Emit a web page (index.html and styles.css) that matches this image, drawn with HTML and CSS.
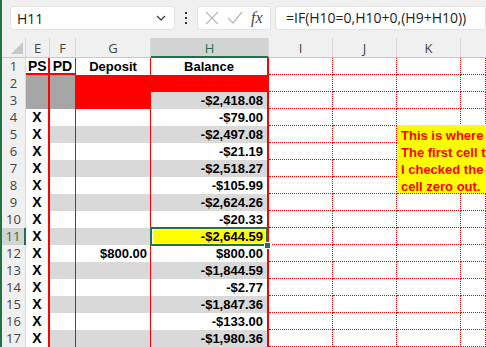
FILE: index.html
```html
<!DOCTYPE html>
<html>
    <head>
        <meta charset="UTF-8">
        <title>Balance sheet</title>
        <link rel="stylesheet" href="styles.css">
    </head>
    <body>
        <div id="app">
            <div class="toolbar">
                <div class="namebox">
                    <span>H11</span>
                    <svg class="chev" width="10" height="6" viewBox="0 0 10 6"><path d="M1 1 L5 5 L9 1" fill="none" stroke="#333" stroke-width="1.2"/></svg>
                </div>
                <svg class="dots" width="4" height="12" viewBox="0 0 4 12"><rect x="1" y="0" width="2" height="2" fill="#333"/><rect x="1" y="5" width="2" height="2" fill="#333"/><rect x="1" y="10" width="2" height="2" fill="#333"/></svg>
                <div class="fxbox">
                    <svg width="14" height="14" viewBox="0 0 14 14"><path d="M1 1 L13 13 M13 1 L1 13" stroke="#b9b9b9" stroke-width="1.2"/></svg>
                    <svg width="16" height="14" viewBox="0 0 16 14"><path d="M1 7 L6 12 L15 1" fill="none" stroke="#b9b9b9" stroke-width="1.2"/></svg>
                    <span class="fx">fx</span>
                </div>
                <div class="formula">=IF(H10=0,H10+0,(H9+H10))</div>
            </div>

            <div class="sheet">
                <div class="corner"><svg width="12" height="12" viewBox="0 0 12 12"><path d="M12 0 L12 12 L0 12 Z" fill="#c8c8c8"/></svg></div>
                <div class="ch">E</div><div class="ch">F</div><div class="ch">G</div><div class="ch active">H</div><div class="ch">I</div><div class="ch">J</div><div class="ch">K</div><div class="ch last"></div>

                <div class="rh">1</div><div class="e top">PS</div><div class="f top">PD</div><div class="g c">Deposit</div><div class="h c">Balance</div><div class="d"></div><div class="d"></div><div class="d"></div><div class="d"></div>
                <div class="rh">2</div><div class="e dk"></div><div class="f dk"></div><div class="g red"></div><div class="h red"></div><div class="d"></div><div class="d"></div><div class="d"></div><div class="d"></div>
                <div class="rh">3</div><div class="e dk"></div><div class="f dk"></div><div class="g red"></div><div class="h alt">-$2,418.08</div><div class="d"></div><div class="d"></div><div class="d"></div><div class="d"></div>
                <div class="rh">4</div><div class="e">X</div><div class="f"></div><div class="g"></div><div class="h">-$79.00</div><div class="d"></div><div class="d"></div><div class="d"></div><div class="d"></div>
                <div class="rh">5</div><div class="e">X</div><div class="f alt"></div><div class="g alt"></div><div class="h alt">-$2,497.08</div><div class="d"></div><div class="d"></div><div class="d"></div><div class="d"></div>
                <div class="rh">6</div><div class="e">X</div><div class="f"></div><div class="g"></div><div class="h">-$21.19</div><div class="d"></div><div class="d"></div><div class="d"></div><div class="d"></div>
                <div class="rh">7</div><div class="e">X</div><div class="f alt"></div><div class="g alt"></div><div class="h alt">-$2,518.27</div><div class="d"></div><div class="d"></div><div class="d"></div><div class="d"></div>
                <div class="rh">8</div><div class="e">X</div><div class="f"></div><div class="g"></div><div class="h">-$105.99</div><div class="d"></div><div class="d"></div><div class="d"></div><div class="d"></div>
                <div class="rh">9</div><div class="e">X</div><div class="f alt"></div><div class="g alt"></div><div class="h alt">-$2,624.26</div><div class="d"></div><div class="d"></div><div class="d"></div><div class="d"></div>
                <div class="rh">10</div><div class="e">X</div><div class="f"></div><div class="g"></div><div class="h">-$20.33</div><div class="d"></div><div class="d"></div><div class="d"></div><div class="d"></div>
                <div class="rh active">11</div><div class="e">X</div><div class="f alt"></div><div class="g alt"></div><div class="h sel">-$2,644.59</div><div class="d"></div><div class="d"></div><div class="d"></div><div class="d"></div>
                <div class="rh">12</div><div class="e">X</div><div class="f"></div><div class="g">$800.00</div><div class="h">$800.00</div><div class="d"></div><div class="d"></div><div class="d"></div><div class="d"></div>
                <div class="rh">13</div><div class="e">X</div><div class="f alt"></div><div class="g alt"></div><div class="h alt">-$1,844.59</div><div class="d"></div><div class="d"></div><div class="d"></div><div class="d"></div>
                <div class="rh">14</div><div class="e">X</div><div class="f"></div><div class="g"></div><div class="h">-$2.77</div><div class="d"></div><div class="d"></div><div class="d"></div><div class="d"></div>
                <div class="rh">15</div><div class="e">X</div><div class="f alt"></div><div class="g alt"></div><div class="h alt">-$1,847.36</div><div class="d"></div><div class="d"></div><div class="d"></div><div class="d"></div>
                <div class="rh">16</div><div class="e">X</div><div class="f"></div><div class="g"></div><div class="h">-$133.00</div><div class="d"></div><div class="d"></div><div class="d"></div><div class="d"></div>
                <div class="rh">17</div><div class="e">X</div><div class="f alt"></div><div class="g alt"></div><div class="h alt">-$1,980.36</div><div class="d"></div><div class="d"></div><div class="d"></div><div class="d"></div>

                <!-- text box shape sitting over K5:L8 -->
                <div class="note">
                    This is where<br>
                    The first cell t<br>
                    I checked the<br>
                    cell zero out.
                </div>
            </div>
        </div>
    </body>
</html>
```

FILE: styles.css
```css
body{
    margin: 0;
    overflow: hidden;
    background: white;
}

#app{
    border-left: 2px solid #217346;
    height: 347px;
}

.toolbar{
    height: 38px;
    background: #f0f0f0;
    display: flex;
    align-items: center;
    padding-left: 8px;
    box-sizing: border-box;
    padding-bottom: 4px;
    padding-top: 2px;
}

.namebox{
    width: 165px;
    height: 24px;
    background: white;
    border: 1px solid #e3e3e3;
    border-radius: 4px;
    box-sizing: border-box;
    display: flex;
    align-items: center;
    justify-content: space-between;
    padding: 0 8px 0 6px;
    font-family: "Open Sans", sans-serif;
    font-size: 14px;
    color: #222;
}

.dots{
    margin: 0 9px 0 9px;
}

.fxbox{
    width: 74px;
    height: 24px;
    background: white;
    border: 1px solid #e3e3e3;
    border-radius: 4px 0 0 4px;
    box-sizing: border-box;
    display: flex;
    align-items: center;
    gap: 8px;
    padding-left: 7px;
}

.fx{
    font-family: "Liberation Serif", serif;
    font-style: italic;
    font-size: 16px;
    color: #444;
}

.formula{
    flex: 1;
    height: 24px;
    margin-left: 4px;
    background: white;
    border: 1px solid #e3e3e3;
    border-radius: 4px 0 0 4px;
    box-sizing: border-box;
    padding-left: 10px;
    line-height: 22px;
    font-family: "Open Sans", sans-serif;
    font-size: 14px;
    color: #222;
    white-space: nowrap;
}

.sheet{
    position: relative;
    display: grid;
    grid-template-columns: 24px 24px 26px 75px 118px 64px 64px 64px 1fr;
    grid-template-rows: 20px;
    grid-auto-rows: 17px;
    font-family: "Liberation Sans", Arial, sans-serif;
    font-weight: bold;
    font-size: 13px;
    color: black;
}

.sheet > div{
    box-sizing: border-box;
    line-height: 17px;
    white-space: nowrap;
}

.corner{
    background: #f0f0f0;
    border-bottom: 1px solid #c8c8c8;
    border-right: 1px solid #d8d8d8;
    display: flex;
    align-items: flex-end;
    justify-content: flex-end;
    padding: 0 2px 3px 0;
}

.ch{
    background: #f0f0f0;
    border-bottom: 1px solid #c8c8c8;
    border-right: 1px solid #d8d8d8;
    font-family: "Open Sans", sans-serif;
    font-weight: normal;
    font-size: 13px;
    color: #444;
    text-align: center;
    line-height: 20px !important;
}

.ch.last{
    border-right: none;
}

.ch.active{
    background: #d3d3d3;
    color: #217346;
    border-bottom: 2px solid #217346;
}

.rh{
    background: #f0f0f0;
    border-right: 1px solid #d8d8d8;
    font-family: "Open Sans", sans-serif;
    font-weight: normal;
    font-size: 13px;
    color: #444;
    text-align: center;
}

.rh.active{
    background: #d3d3d3;
    color: #217346;
    border-right: 2px solid #217346;
}

.e{
    border-right: 2px solid red;
    text-align: center;
    font-size: 14px;
}

.e.top, .f.top{
    border-bottom: 2px solid red;
    font-size: 14px;
    line-height: 16px !important;
}

.e.top{
    text-align: left;
    padding-left: 2px;
}

.f{
    border-right: 1px solid red;
    text-align: center;
}

.g{
    border-right: 1px solid red;
    text-align: right;
    padding-right: 3px;
}

.h{
    border-right: 2px solid red;
    text-align: right;
    padding-right: 4px;
}

.c{
    text-align: center;
    padding-right: 0;
}

.d{
    border-right: 1px dotted red;
    border-bottom: 1px dotted red;
}

.alt{
    background: #d9d9d9;
}

.dk{
    background: #a6a6a6;
}

.red{
    background: red;
}

.sel{
    position: relative;
    background: yellow;
}

.sel::before{
    content: "";
    position: absolute;
    left: -1px;
    top: -1px;
    right: -1px;
    bottom: -1px;
    border: 2px solid #217346;
    box-shadow: inset 0 0 0 1px white;
}

.sel::after{
    content: "";
    position: absolute;
    right: -4px;
    bottom: -4px;
    width: 5px;
    height: 5px;
    background: #217346;
    border: 1px solid white;
}

.note{
    position: absolute;
    left: 395px;
    top: 87px;
    width: 89px;
    height: 68px;
    background: yellow;
    color: red;
    padding: 2px 0 0 4px;
    box-sizing: border-box;
    line-height: 17px !important;
}
```
